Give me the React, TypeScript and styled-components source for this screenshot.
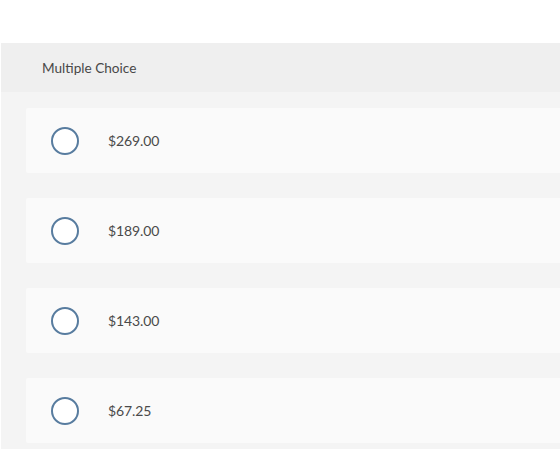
import React from 'react';
import styled, { createGlobalStyle } from 'styled-components';

const GlobalStyle = createGlobalStyle`
    html, body {
        margin: 0;
        padding: 0;
        background: #fff;
    }
    body {
        font-family: Lato, "Open Sans", "Liberation Sans", sans-serif;
    }
`

const Page = styled.div`
    padding-top: 43px;
    padding-left: 1px;
    height: 449px;
    box-sizing: border-box;
    overflow: hidden;
`

const Panel = styled.section`
    background: #f4f4f4;
    height: 406px;
`

const Header = styled.div`
    display: flex;
    align-items: center;
    height: 49px;
    padding-left: 41px;
    background: #efefef;
    font-size: 13.6px;
    color: #484848;
`

const Options = styled.div`
    display: flex;
    flex-flow: column;
    gap: 25px;
    padding: 16px 0 0 25px;
`

const Option = styled.label`
    display: flex;
    align-items: center;
    height: 65px;
    padding-left: 25px;
    background: #fafafa;
    border-radius: 2px 0 0 2px;
    cursor: pointer;
`

const Radio = styled.span`
    width: 24px;
    height: 24px;
    border: 2px solid #587c9f;
    border-radius: 50%;
    background: #fff;
`

const Price = styled.span`
    margin-left: 29px;
    font-size: 14px;
    color: #4a4a4a;
    letter-spacing: -0.1px;
`

const prices = ['$269.00', '$189.00', '$143.00', '$67.25'];

export default function App() {
    return (
        <Page>
            <GlobalStyle />
            <Panel>
                <Header>Multiple Choice</Header>
                <Options>
                    {prices.map(price => (
                        <Option key={price}>
                            <Radio />
                            <Price>{price}</Price>
                        </Option>
                    ))}
                </Options>
            </Panel>
        </Page>
    )
}
